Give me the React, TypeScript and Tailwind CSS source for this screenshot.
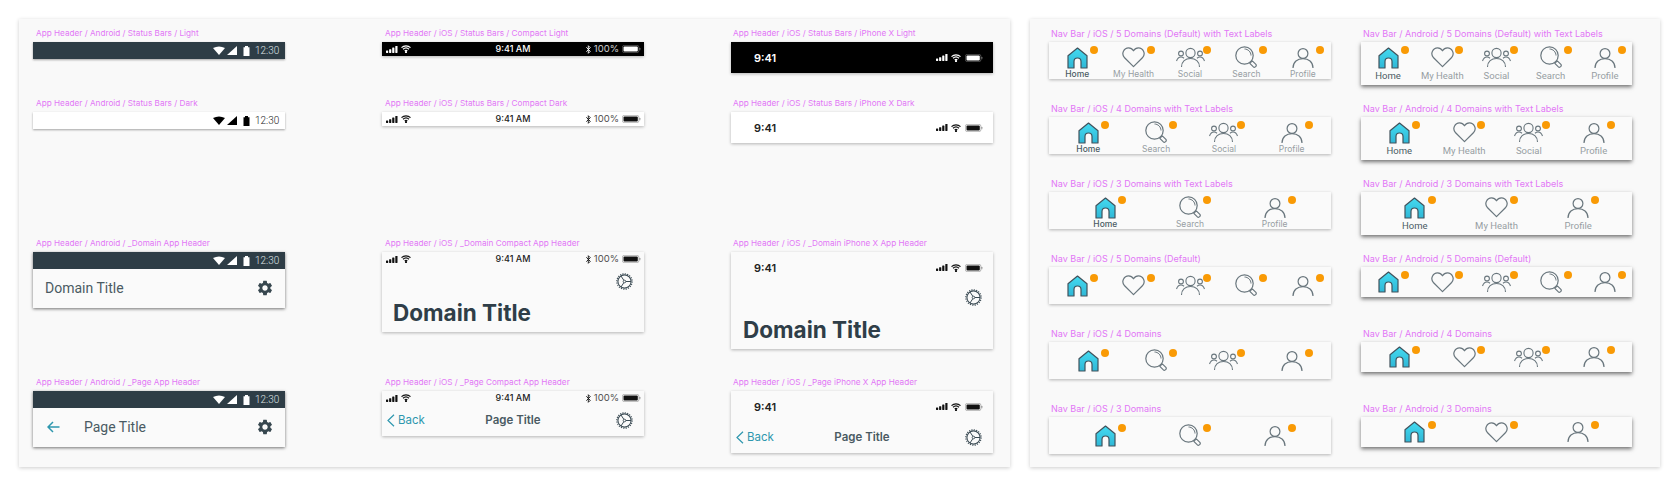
import React from "react";
import { MdSettings } from "react-icons/md";

const Label = ({ children, className = "" }: { children: React.ReactNode; className?: string }) => (
  <div className={`h-[14px] leading-[11px] whitespace-nowrap text-[#e277f6] font-['Inter',sans-serif] ${className}`}>{children}</div>
);

const AWifi = ({ c }: { c: string }) => (
  <svg width="12" height="9" viewBox="0 0 12 9"><path d="M0 2 Q6 -1.2 12 2 L6 9 Z" fill={c} /></svg>
);
const ASignal = ({ c }: { c: string }) => (
  <svg width="10" height="9" viewBox="0 0 10 9"><polygon points="0,9 10,9 10,0" fill={c} /></svg>
);
const ABatt = ({ c }: { c: string }) => (
  <svg width="7" height="10" viewBox="0 0 7 10"><path d="M0.5 1.2 H2 V0 H5 V1.2 H6.5 V10 H0.5 Z" fill={c} /></svg>
);

const AndroidStatus = ({ dark }: { dark?: boolean }) => {
  const c = dark ? "#000000" : "#ffffff";
  return (
    <div className={`h-[17px] flex items-center justify-end pr-[6px] ${dark ? "bg-white text-[#222]" : "bg-[#2e3d46] text-[#dfe3e5]"}`}>
      <AWifi c={c} />
      <div className="ml-[2px]"><ASignal c={c} /></div>
      <div className="ml-[6px]"><ABatt c={c} /></div>
      <span className="ml-[5px] w-[24px] text-[10px] leading-[12px] font-light font-['Roboto',sans-serif]">12:30</span>
    </div>
  );
};

const ISignal = ({ c }: { c: string }) => (
  <svg width="12" height="7" viewBox="0 0 12 7" fill={c}>
    <rect x="0" y="4.6" width="2.2" height="2.4" rx="0.4" />
    <rect x="3.1" y="3.2" width="2.2" height="3.8" rx="0.4" />
    <rect x="6.2" y="1.6" width="2.2" height="5.4" rx="0.4" />
    <rect x="9.3" y="0" width="2.2" height="7" rx="0.4" />
  </svg>
);
const IWifi = ({ c }: { c: string }) => (
  <svg width="10" height="8" viewBox="0 0 10 8" fill="none" stroke={c} strokeWidth="1.2">
    <path d="M0.5 2.6 C3 0.2 7 0.2 9.5 2.6" />
    <path d="M2 4.3 C3.7 2.8 6.3 2.8 8 4.3" />
    <path d="M3.7 6 C4.5 5.3 5.5 5.3 6.3 6" />
    <circle cx="5" cy="7" r="0.5" fill={c} />
  </svg>
);
const IBatt = ({ c, w = 17 }: { c: string; w?: number }) => (
  <svg width={w + 2} height="8" viewBox={`0 0 ${w + 2} 8`}>
    <rect x="0.4" y="0.4" width={w - 0.5} height="7.2" rx="1.8" fill="none" stroke={c} strokeOpacity="0.35" strokeWidth="0.8" />
    <rect x="1.5" y="1.5" width={w - 2.7} height="5" rx="1" fill={c} />
    <rect x={w + 0.4} y="2.8" width="1" height="2.4" rx="0.5" fill={c} fillOpacity="0.4" />
  </svg>
);
const IBt = ({ c }: { c: string }) => (
  <svg width="5" height="9" viewBox="0 0 5 9" fill="none" stroke={c} strokeWidth="0.9">
    <path d="M0.3 2.3 L4.3 6.3 L2.3 8.3 V0.7 L4.3 2.7 L0.3 6.7" />
  </svg>
);

const CompactStatus = ({ tone = "light" }: { tone?: "black" | "white" | "light" }) => {
  const c = tone === "black" ? "#ffffff" : "#111111";
  const bg = tone === "black" ? "bg-black text-white" : tone === "white" ? "bg-white text-[#222]" : "text-[#222]";
  return (
    <div className={`relative h-[14px] flex items-center justify-between pl-[4px] pr-[3px] font-['Inter',sans-serif] ${bg}`}>
      <div className="flex items-center">
        <ISignal c={c} />
        <div className="ml-[3px]"><IWifi c={c} /></div>
      </div>
      <span className="absolute left-0 right-0 text-center text-[9px] leading-[14px] font-medium">9:41 AM</span>
      <div className="flex items-center">
        <IBt c={c} />
        <span className="ml-[3px] text-[9.5px] leading-[14px] opacity-80">100%</span>
        <div className="ml-[3px]"><IBatt c={c} /></div>
      </div>
    </div>
  );
};

const XStatus = ({ tone = "light" }: { tone?: "black" | "white" | "light" }) => {
  const c = tone === "black" ? "#ffffff" : "#111111";
  const bg = tone === "black" ? "bg-black text-white" : tone === "white" ? "bg-white text-[#222]" : "text-[#222]";
  return (
    <div className={`h-[31px] flex items-center pl-[23px] pr-[10px] font-['Inter',sans-serif] ${bg}`}>
      <span className="flex-1 text-[11px] leading-[14px] font-semibold">9:41</span>
      <ISignal c={c} />
      <div className="ml-[3px]"><IWifi c={c} /></div>
      <div className="ml-[4px]"><IBatt c={c} w={16} /></div>
    </div>
  );
};

const Gear = () => (
  <svg width="17" height="17" viewBox="0 0 17 17" fill="none" stroke="#3b4b54">
    <circle cx="8.5" cy="8.5" r="6.6" strokeWidth="1.1" />
    <circle cx="8.5" cy="8.5" r="7.7" strokeWidth="1.1" strokeDasharray="1.2 1.22" />
    <circle cx="8.5" cy="8.5" r="1.3" strokeWidth="0.9" />
    <path d="M9.8 8.5 H15 M7.9 7.4 L4.9 2.9 M7.9 9.6 L4.9 14.1" strokeWidth="1" />
  </svg>
);

const Chevron = () => (
  <svg width="8" height="13" viewBox="0 0 8 13" fill="none" stroke="#2e97ae" strokeWidth="1.2">
    <path d="M7 0.7 L1 6.5 L7 12.3" />
  </svg>
);

const AHeaderBody = ({ page }: { page?: boolean }) => (
  <div className="h-[39px] pb-[1px] flex items-center pl-[12px] pr-[11px] font-['Roboto',sans-serif] text-[14px] text-[#4a5a63]">
    {page ? (
      <>
        <svg className="ml-[2px]" width="13" height="12" viewBox="0 0 13 12" fill="none" stroke="#2e97ae" strokeWidth="1.5">
          <path d="M12.5 6 H1 M6 1 L1 6 L6 11" />
        </svg>
        <span className="ml-[24px] flex-1">Page Title</span>
      </>
    ) : (
      <span className="flex-1">Domain Title</span>
    )}
    <MdSettings size={18} color="#37474f" />
  </div>
);

const ACard = ({ children }: { children: React.ReactNode }) => (
  <div className="w-[252px] bg-[#fafafa] shadow-[0_1px_3px_rgba(0,0,0,0.55)]">{children}</div>
);
const ICard = ({ children, className = "" }: { children: React.ReactNode; className?: string }) => (
  <div className={`w-[262px] bg-[#fafafa] shadow-[0_1px_3px_rgba(0,0,0,0.28)] ${className}`}>{children}</div>
);

const IOSPageRow = () => (
  <div className="h-[31px] relative flex items-center justify-between pl-[5px] pr-[11px] font-['Inter',sans-serif]">
    <div className="flex items-center gap-[3px] text-[11.5px] text-[#2e97ae]">
      <Chevron />
      <span>Back</span>
    </div>
    <span className="absolute left-0 right-0 text-center text-[11.5px] font-semibold text-[#4a5a63]">Page Title</span>
    <Gear />
  </div>
);

const Home = () => (
  <svg width="21" height="22" viewBox="0 0 21 22">
    <defs>
      <linearGradient id="hg" x1="0" y1="0" x2="0" y2="1">
        <stop offset="0" stopColor="#44dbf1" />
        <stop offset="1" stopColor="#2fb7d6" />
      </linearGradient>
    </defs>
    <path d="M10.5 1 L20 8.8 V21 H14 V14.5 A3.5 3.5 0 0 0 7 14.5 V21 H1 V8.8 Z" fill="url(#hg)" stroke="#41525c" strokeWidth="1.2" strokeLinejoin="round" />
  </svg>
);
const Heart = () => (
  <svg width="23" height="21" viewBox="0 0 23 21" fill="none" stroke="#69767d" strokeWidth="1.2">
    <path d="M11.5 19.6 L2.6 10.8 C-1.4 6.4 2.2 0.8 6.6 0.8 C8.8 0.8 10.4 2 11.5 3.8 C12.6 2 14.2 0.8 16.4 0.8 C20.8 0.8 24.4 6.4 20.4 10.8 Z" strokeLinejoin="round" />
  </svg>
);
const Social = () => (
  <svg width="29" height="21" viewBox="0 0 29 21" fill="none" stroke="#69767d" strokeWidth="1.1">
    <circle cx="14.5" cy="6" r="4.6" />
    <circle cx="5" cy="6.5" r="2.4" />
    <circle cx="24" cy="6.5" r="2.4" />
    <path d="M5.5 20 C5.5 14.5 9.5 11.5 14.5 11.5 C19.5 11.5 23.5 14.5 23.5 20" />
    <path d="M0.5 14 C1.5 11 3 10 5 10 C6.2 10 7 10.4 8 11.2" />
    <path d="M28.5 14 C27.5 11 26 10 24 10 C22.8 10 22 10.4 21 11.2" />
  </svg>
);
const Search = () => (
  <svg width="22" height="23" viewBox="0 0 22 23" fill="none" stroke="#69767d" strokeWidth="1.2">
    <circle cx="9.5" cy="9.5" r="8.7" />
    <path d="M9.5 3 C13 3 16 6 16 9.5" strokeWidth="1" />
    <path d="M14.8 17.3 L17.3 14.8 L20.9 18.4 A1.8 1.8 0 0 1 18.4 20.9 Z" strokeLinejoin="round" />
  </svg>
);
const Profile = () => (
  <svg width="22" height="20" viewBox="0 0 22 20" fill="none" stroke="#69767d" strokeWidth="1.2">
    <circle cx="11" cy="5.5" r="4.9" />
    <path d="M1 20 C1 14 5.5 10.6 11 10.6 C16.5 10.6 21 14 21 20" />
  </svg>
);

const ICONS: Record<string, () => React.JSX.Element> = {
  Home,
  "My Health": Heart,
  Social,
  Search,
  Profile,
};

const NavItem = ({ name, text, android }: { name: string; text: boolean; android?: boolean }) => {
  const Icon = ICONS[name];
  const on = name === "Home";
  return (
    <div className="flex-1 flex flex-col items-center">
      <div className="relative h-[21px] flex items-center justify-center">
        <Icon />
        <span className="absolute top-[-1px] left-1/2 ml-[13px] w-[8px] h-[8px] rounded-full bg-[#f99a05]" />
      </div>
      {text && (
        <span
          className={`leading-[11px] whitespace-nowrap ${
            android ? "mt-[2px] font-['Roboto',sans-serif] text-[9.5px]" : "mt-[1px] font-['Inter',sans-serif] text-[8.5px]"
          } ${on ? (android ? "text-[#4a5a63]" : "text-[#4a5a63] font-medium") : "text-[#979ea3]"}`}
        >
          {name}
        </span>
      )}
    </div>
  );
};

const PAD: Record<number, string> = { 5: "px-0", 4: "px-[5.5px]", 3: "px-[14px]" };

const IOSNav = ({ items, text }: { items: string[]; text?: boolean }) => (
  <div className={`w-[282px] h-[37px] bg-[#fafafa] shadow-[0_1px_3px_rgba(0,0,0,0.28)] flex ${text ? "items-start pt-[5px]" : "items-center"} ${PAD[items.length]}`}>
    {items.map((n) => (
      <NavItem key={n} name={n} text={!!text} />
    ))}
  </div>
);

const AndroidNav = ({ items, text }: { items: string[]; text?: boolean }) => (
  <div className={`w-[271px] ${text ? "h-[43px] items-start pt-[5px]" : "h-[30px] items-center"} bg-[#fafafa] shadow-[0_2px_4px_rgba(0,0,0,0.55)] flex ${items.length === 5 ? "px-0" : items.length === 4 ? "px-[6px]" : "px-[13px]"}`}>
    {items.map((n) => (
      <NavItem key={n} name={n} text={!!text} android />
    ))}
  </div>
);

const Slot = ({ label, children, lx = "ml-[3px]", size = "text-[8.2px]" }: { label: string; children: React.ReactNode; lx?: string; size?: string }) => (
  <div>
    <Label className={`${lx} ${size}`}>{label}</Label>
    {children}
  </div>
);

const I5 = ["Home", "My Health", "Social", "Search", "Profile"];
const I4 = ["Home", "Search", "Social", "Profile"];
const I3 = ["Home", "Search", "Profile"];
const A4 = ["Home", "My Health", "Social", "Profile"];
const A3 = ["Home", "My Health", "Profile"];

const NAV = [
  { t: "5 Domains (Default) with Text Labels", i: I5, a: I5, text: true },
  { t: "4 Domains with Text Labels", i: I4, a: A4, text: true },
  { t: "3 Domains with Text Labels", i: I3, a: A3, text: true },
  { t: "5 Domains (Default)", i: I5, a: I5, text: false },
  { t: "4 Domains", i: I4, a: A4, text: false },
  { t: "3 Domains", i: I3, a: A3, text: false },
];

const TITLE = "text-[22.5px] leading-[30px] font-bold text-[#2f3e48] font-['Inter',sans-serif]";

export default function App() {
  return (
    <div className="w-[1680px] h-[488px] bg-white flex pt-[19px] pl-[19px] overflow-hidden">
      <div className="w-[991px] h-[448px] bg-[#f9f9f9] shadow-[0_1px_4px_rgba(0,0,0,0.2)] pl-[14px] pt-[9px] grid grid-cols-[349px_349px_262px] grid-rows-[70px_140px_139px_auto]">
        <Slot label="App Header / Android / Status Bars / Light">
          <div className="w-[252px] shadow-[0_1px_2px_rgba(0,0,0,0.35)]"><AndroidStatus /></div>
        </Slot>
        <Slot label="App Header / iOS / Status Bars / Compact Light">
          <ICard><CompactStatus tone="black" /></ICard>
        </Slot>
        <Slot label="App Header / iOS / Status Bars / iPhone X Light" lx="ml-[2px]">
          <ICard><XStatus tone="black" /></ICard>
        </Slot>

        <Slot label="App Header / Android / Status Bars / Dark">
          <div className="w-[252px] shadow-[0_1px_2px_rgba(0,0,0,0.35)]"><AndroidStatus dark /></div>
        </Slot>
        <Slot label="App Header / iOS / Status Bars / Compact Dark">
          <ICard><CompactStatus tone="white" /></ICard>
        </Slot>
        <Slot label="App Header / iOS / Status Bars / iPhone X Dark" lx="ml-[2px]">
          <ICard><XStatus tone="white" /></ICard>
        </Slot>

        <Slot label="App Header / Android / _Domain App Header">
          <ACard><AndroidStatus /><AHeaderBody /></ACard>
        </Slot>
        <Slot label="App Header / iOS / _Domain Compact App Header">
          <ICard>
            <CompactStatus />
            <div className="flex justify-end pr-[11px] pt-[7px]"><Gear /></div>
            <div className={`pl-[11px] pt-[8px] h-[42px] ${TITLE}`}>Domain Title</div>
          </ICard>
        </Slot>
        <Slot label="App Header / iOS / _Domain iPhone X App Header" lx="ml-[2px]">
          <ICard>
            <XStatus />
            <div className="flex justify-end pr-[11px] pt-[6px]"><Gear /></div>
            <div className={`pl-[12px] pt-[9px] h-[43px] ${TITLE}`}>Domain Title</div>
          </ICard>
        </Slot>

        <Slot label="App Header / Android / _Page App Header">
          <ACard><AndroidStatus /><AHeaderBody page /></ACard>
        </Slot>
        <Slot label="App Header / iOS / _Page Compact App Header">
          <ICard>
            <CompactStatus />
            <IOSPageRow />
          </ICard>
        </Slot>
        <Slot label="App Header / iOS / _Page iPhone X App Header" lx="ml-[2px]">
          <ICard>
            <XStatus />
            <IOSPageRow />
          </ICard>
        </Slot>
      </div>

      <div className="ml-[20px] w-[630px] h-[448px] bg-[#f9f9f9] shadow-[0_1px_4px_rgba(0,0,0,0.2)] pl-[19px] pt-[9px] grid grid-cols-[312px_271px] auto-rows-[75px]">
        {NAV.map((n) => (
          <React.Fragment key={n.t}>
            <Slot label={`Nav Bar / iOS / ${n.t}`} lx="ml-[2px]" size="text-[9px]">
              <IOSNav items={n.i} text={n.text} />
            </Slot>
            <Slot label={`Nav Bar / Android / ${n.t}`} lx="ml-[2px]" size="text-[9px]">
              <AndroidNav items={n.a} text={n.text} />
            </Slot>
          </React.Fragment>
        ))}
      </div>
    </div>
  );
}
